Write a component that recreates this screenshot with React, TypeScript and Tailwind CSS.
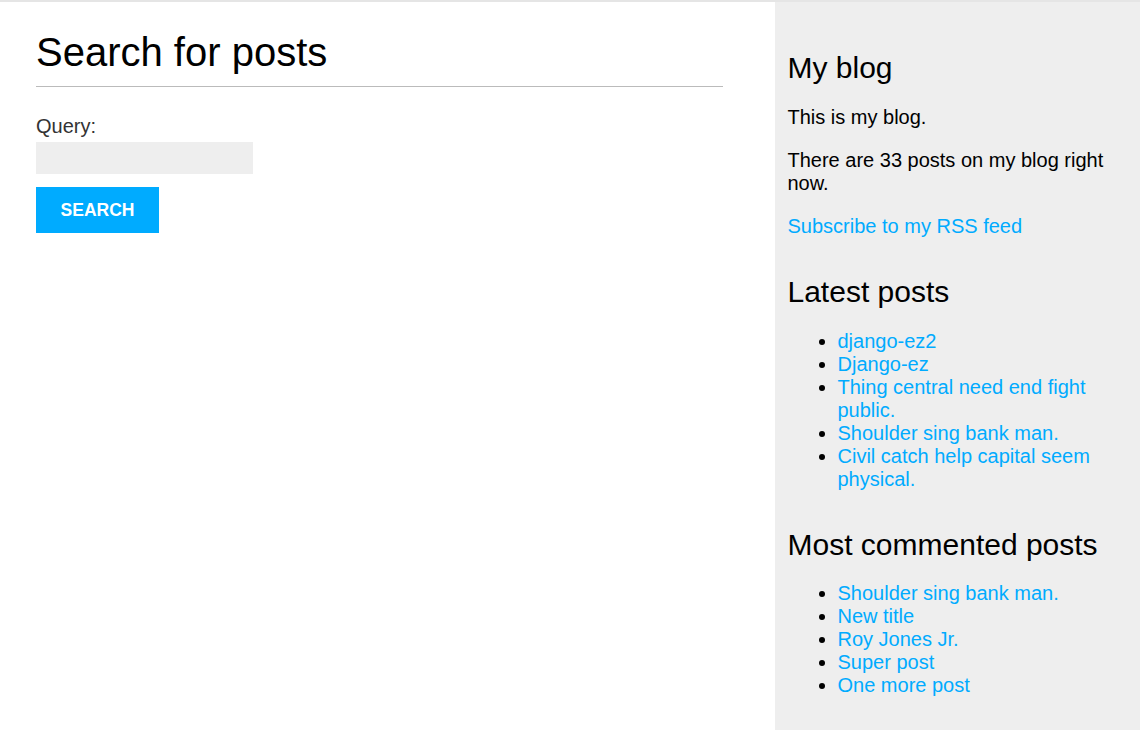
import React from 'react';

const latestPosts = [
  'django-ez2',
  'Django-ez',
  'Thing central need end fight public.',
  'Shoulder sing bank man.',
  'Civil catch help capital seem physical.',
];

const mostCommented = [
  'Shoulder sing bank man.',
  'New title',
  'Roy Jones Jr.',
  'Super post',
  'One more post',
];

const PostList: React.FC<{ items: string[] }> = ({ items }) => (
  <ul className="list-disc pl-[50px] my-[20px] leading-[23px]">
    {items.map((item, i) => (
      <li key={i}>
        <a href="#" className="text-[#00abff]">{item}</a>
      </li>
    ))}
  </ul>
);

const App: React.FC = () => {
  return (
    <div className="min-h-[734px] bg-white text-black text-[20px] leading-[23px] font-['Liberation_Sans',Arial,sans-serif]">
      <div className="h-[2px] bg-[#e5e5e5]" />
      <div className="flex justify-between">
        <div className="w-[687px] ml-[36px]">
          <h1 className="mt-[27px] mb-[28px] pb-[10.5px] border-b border-[#bbbbbb] text-[40px] leading-[46px] font-normal">
            Search for posts
          </h1>
          <form onSubmit={(e) => e.preventDefault()}>
            <label className="block text-[#333333]">Query:</label>
            <input
              type="text"
              className="block mt-[4.5px] w-[217px] h-[32px] bg-[#eeeeee] border-none outline-none px-1 text-[#333333]"
            />
            <button
              type="submit"
              className="mt-[13px] w-[123px] h-[46px] bg-[#00abff] text-white font-bold text-[17.5px] uppercase"
            >
              Search
            </button>
          </form>
        </div>
        <aside className="w-[365px] min-h-[728px] bg-[#eeeeee] px-[12.5px] pt-[12.5px] pb-[12.5px]">
          <h2 className="mt-[36.5px] text-[30px] leading-[34.5px] font-normal">My blog</h2>
          <p className="mt-[20px]">This is my blog.</p>
          <p className="mt-[20px]">There are 33 posts on my blog right now.</p>
          <p className="mt-[20px]">
            <a href="#" className="text-[#00abff]">Subscribe to my RSS feed</a>
          </p>
          <h2 className="mt-[37.5px] text-[30px] leading-[34.5px] font-normal">Latest posts</h2>
          <PostList items={latestPosts} />
          <h2 className="mt-[37px] text-[30px] leading-[34.5px] font-normal">Most commented posts</h2>
          <PostList items={mostCommented} />
        </aside>
      </div>
    </div>
  );
};

export default App;
